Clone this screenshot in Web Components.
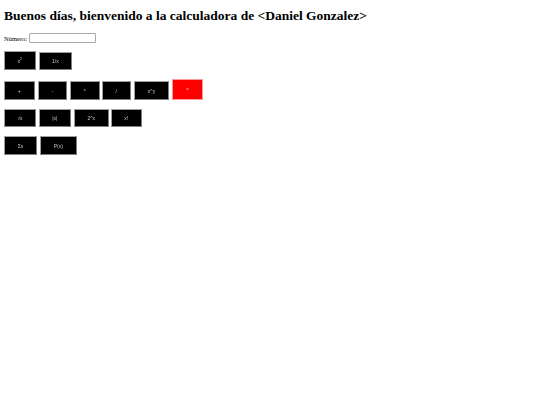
<!DOCTYPE html>
<html lang="es">
<head>
<meta charset="utf-8">
<title>Calculadora</title>
<style>
  html, body { margin: 0; background: #fff; }
  body { font-family: "Liberation Serif", serif; color: #000; }
</style>
</head>
<body>
<calc-app></calc-app>

<script>
class CalcButton extends HTMLElement {
  constructor() {
    super();
    this.attachShadow({ mode: 'open' });
    this.shadowRoot.innerHTML = `
      <style>
        :host { display: block; }
        button {
          display: block;
          box-sizing: border-box;
          width: 100%;
          height: var(--h, 18px);
          padding: 0;
          background: var(--bg, #000);
          color: var(--fg, #c8c8c8);
          border: 1px solid;
          border-color: var(--edge-light, #a0a0a0) var(--edge, #808080) var(--edge, #808080) var(--edge-light, #a0a0a0);
          font: 5px "Liberation Sans", sans-serif;
          /* keeps the tiny labels grey, without colour fringes */
          will-change: transform;
        }
      </style>
      <button><slot></slot></button>
    `;
  }
}
customElements.define('calc-button', CalcButton);

class CalcRow extends HTMLElement {
  constructor() {
    super();
    this.attachShadow({ mode: 'open' });
    this.shadowRoot.innerHTML = `
      <style>
        :host { display: flex; align-items: flex-end; gap: 3px; }
      </style>
      <slot></slot>
    `;
  }
}
customElements.define('calc-row', CalcRow);

class CalcApp extends HTMLElement {
  constructor() {
    super();
    this.attachShadow({ mode: 'open' });
    const btn = (label, w, h, extra = '') =>
      `<calc-button style="width:${w}px;--h:${h}px;${extra}">${label}</calc-button>`;
    this.shadowRoot.innerHTML = `
      <style>
        :host { display: block; padding: 7px 4px 0; }
        h1 { margin: 0; font-size: 13.5px; line-height: 18px; font-weight: bold; }
        .field { display: flex; align-items: center; gap: 2px; margin-top: 8px; font-size: 6.5px; height: 10px; }
        input { box-sizing: border-box; width: 67px; height: 10px; margin: 0; padding: 0; border: 1px solid #a8a8a8; border-radius: 1px; background: #fff; }
        .first { margin-top: 8px; }
        .ops { margin-top: 9px; }
        .third { margin-top: 9px; }
        .fourth { margin-top: 9.5px; }
      </style>
      <h1>Buenos días, bienvenido a la calculadora de &lt;Daniel Gonzalez&gt;</h1>
      <div class="field"><label for="n">Número:</label><input id="n" type="text"></div>
      <calc-row class="first">
        ${btn('x<sup style="font-size:3.5px;line-height:0">2</sup>', 31.7, 19)}
        ${btn('1/x', 32.8, 18)}
      </calc-row>
      <calc-row class="ops">
        ${btn('+', 30.5, 19)}
        ${btn('-', 29, 19)}
        ${btn('*', 29.5, 19)}
        ${btn('/', 28.5, 19)}
        ${btn('x^y', 35, 19)}
        ${btn('=', 31, 20.5, '--bg:#f00;--fg:#ffb0b0;--edge:#ff9a9a;--edge-light:#ff9a9a')}
      </calc-row>
      <calc-row class="third">
        ${btn('√x', 32, 18)}
        ${btn('|x|', 31.5, 18)}
        ${btn('2^x', 34.5, 18)}
        ${btn('x!', 30.5, 18)}
      </calc-row>
      <calc-row class="fourth">
        ${btn('Σx', 33, 19)}
        ${btn('P(x)', 36.5, 19)}
      </calc-row>
    `;
  }
}
customElements.define('calc-app', CalcApp);
</script>
</body>
</html>
